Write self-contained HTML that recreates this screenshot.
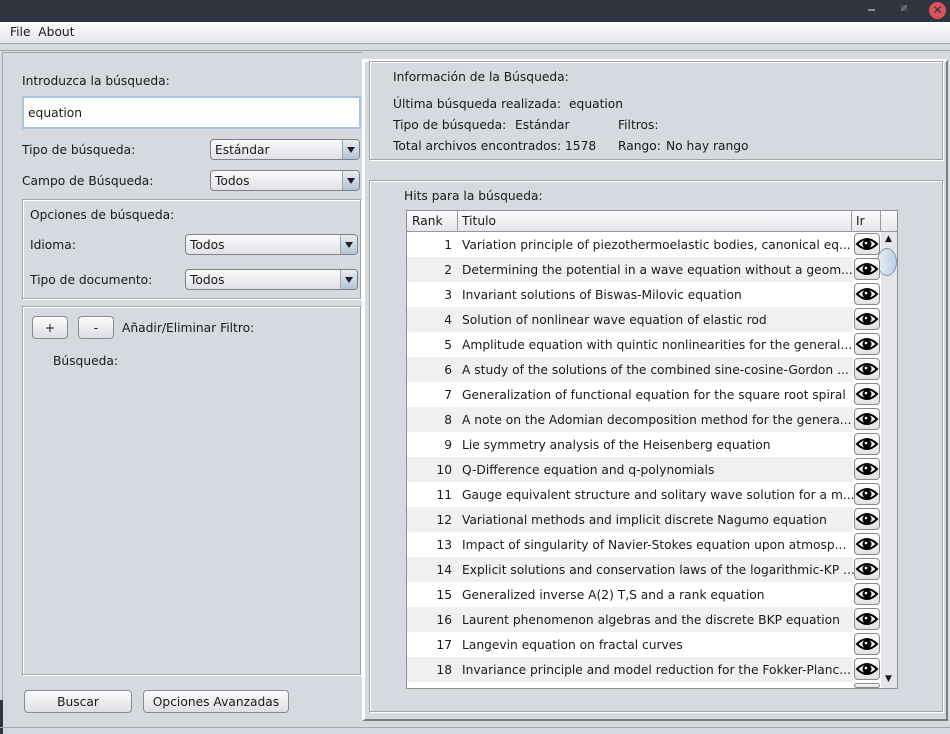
<!DOCTYPE html>
<html><head><meta charset="utf-8"><style>
*{box-sizing:border-box;margin:0;padding:0}
body{width:950px;height:734px;overflow:hidden;background:#d6d9df;font-family:"DejaVu Sans","Liberation Sans",sans-serif;font-size:12.25px;color:#1a1a1a;position:relative}
.a{position:absolute;white-space:nowrap}
.box{position:absolute;border:1px solid #a3a5aa;box-shadow:1px 1px 0 #fff inset,1px 1px 0 #fff}
.combo{position:absolute;height:21px;border:1px solid #7f8186;border-radius:4px;background:linear-gradient(#fbfbfc,#dfe1e5);padding:3px 0 0 4px}
.combo:after{content:"";position:absolute;right:0;top:0;width:16px;height:19px;border-left:1px solid #9aa;background:linear-gradient(#e6edf4,#b4c4d4);border-radius:0 3px 3px 0}
.combo i{position:absolute;right:4px;top:7px;border-left:4px solid transparent;border-right:4px solid transparent;border-top:6px solid #222;z-index:2}
.btn{position:absolute;height:23px;border:1px solid #8a8c90;border-radius:4px;background:linear-gradient(#fcfcfd,#dcdee2);text-align:center;padding-top:4px}
.row{position:absolute;left:407px;width:446px;height:25px}
.row .r{position:absolute;right:401px;top:6px}
.row .t{position:absolute;left:55px;top:6px;white-space:nowrap}
.eye{position:absolute;left:854px;width:26px;height:22px;border:1px solid #888;border-radius:4px;background:linear-gradient(#fff,#e2e2e2)}
</style></head><body>
<div class="a" style="left:0;top:0;width:950px;height:22px;background:#2f343f"></div>
<div class="a" style="left:868px;top:9px;width:7px;height:2px;background:#8a8f99"></div>
<div class="a" style="left:901px;top:5px;width:6px;height:6px;background:linear-gradient(135deg,transparent 40%,#6f7480 40%,#6f7480 60%,transparent 60%),#4a4f5a"></div>
<div class="a" style="left:929px;top:2px;width:17px;height:17px;border-radius:50%;background:#d6545a;color:#2f343f;font-size:12px;font-weight:bold;text-align:center;line-height:17px">✕</div>
<div class="a" style="left:0;top:22px;width:950px;height:22px;background:linear-gradient(#fdfdfe,#e3e5e9);border-bottom:1px solid #a3a5aa"></div>
<div class="a" style="left:10px;top:25px">File&nbsp;&nbsp;About</div>
<div class="a" style="left:0;top:50px;width:950px;height:1px;background:#a3a5aa"></div>

<div class="a" style="left:2px;top:52px;width:360px;height:676px;border-left:1px solid #a3a5aa;border-top:1px solid #a3a5aa"></div>
<div class="a" style="left:22px;top:74px">Introduzca la búsqueda:</div>
<div class="a" style="left:22px;top:96px;width:339px;height:33px;background:#fff;border:2px solid #a9c4de;padding:8px 0 0 4px">equation</div>
<div class="a" style="left:22px;top:143px">Tipo de búsqueda:</div>
<div class="combo" style="left:210px;top:139px;width:150px">Estándar<i></i></div>
<div class="a" style="left:22px;top:174px">Campo de Búsqueda:</div>
<div class="combo" style="left:210px;top:170px;width:150px">Todos<i></i></div>
<div class="box" style="left:22px;top:199px;width:339px;height:100px"></div>
<div class="a" style="left:30px;top:208px">Opciones de búsqueda:</div>
<div class="a" style="left:30px;top:238px">Idioma:</div>
<div class="combo" style="left:185px;top:234px;width:173px">Todos<i></i></div>
<div class="a" style="left:30px;top:273px">Tipo de documento:</div>
<div class="combo" style="left:185px;top:269px;width:173px">Todos<i></i></div>
<div class="box" style="left:22px;top:306px;width:339px;height:369px"></div>
<div class="btn" style="left:32px;top:316px;width:36px">+</div>
<div class="btn" style="left:78px;top:316px;width:36px">-</div>
<div class="a" style="left:122px;top:321px">Añadir/Eliminar Filtro:</div>
<div class="a" style="left:53px;top:354px">Búsqueda:</div>
<div class="btn" style="left:24px;top:690px;width:108px">Buscar</div>
<div class="btn" style="left:143px;top:690px;width:146px">Opciones Avanzadas</div>
<div class="a" style="left:0;top:700px;width:3px;height:34px;background:#2f343f"></div>

<div class="a" style="left:362px;top:59px;width:586px;height:662px;border-left:3px solid #fff;border-top:3px solid #fff;border-bottom:2px solid #7a7c80;border-right:2px solid #7a7c80"></div>
<div class="box" style="left:369px;top:61px;width:574px;height:99px"></div>
<div class="a" style="left:393px;top:70px">Información de la Búsqueda:</div>
<div class="a" style="left:393px;top:97px">Última búsqueda realizada:</div>
<div class="a" style="left:569px;top:97px">equation</div>
<div class="a" style="left:393px;top:118px">Tipo de búsqueda:</div>
<div class="a" style="left:515px;top:118px">Estándar</div>
<div class="a" style="left:618px;top:118px">Filtros:</div>
<div class="a" style="left:393px;top:139px">Total archivos encontrados:</div>
<div class="a" style="left:565px;top:139px">1578</div>
<div class="a" style="left:618px;top:139px">Rango:</div>
<div class="a" style="left:666px;top:139px">No hay rango</div>
<div class="box" style="left:369px;top:180px;width:574px;height:532px"></div>
<div class="a" style="left:404px;top:189px">Hits para la búsqueda:</div>
<div class="a" style="left:406px;top:210px;width:492px;height:479px;border:1px solid #8e9095;background:#fff"></div>
<div class="a" style="left:407px;top:211px;width:490px;height:21px;background:linear-gradient(#fbfbfc,#e4e6ea);border-bottom:1px solid #999"></div>
<div class="a" style="left:457px;top:211px;width:1px;height:21px;background:#999"></div>
<div class="a" style="left:851px;top:211px;width:1px;height:21px;background:#999"></div>
<div class="a" style="left:880px;top:211px;width:1px;height:21px;background:#999"></div>
<div class="a" style="left:412px;top:214px">Rank</div>
<div class="a" style="left:462px;top:214px">Titulo</div>
<div class="a" style="left:856px;top:214px">Ir</div>
<div class="a" style="left:881px;top:232px;width:16px;height:456px;background:#e4e6ea"></div>
<div class="a" style="left:885px;top:234px;font-size:9px">▲</div>
<div class="a" style="left:885px;top:674px;font-size:9px">▼</div>
<div class="a" style="left:877px;top:248px;width:20px;height:28px;border-radius:50%;background:linear-gradient(90deg,#e6eef6,#bcd0e2);border:1px solid #7f98b0"></div>
<div id="rows"></div>
<script>
var t=["Variation principle of piezothermoelastic bodies, canonical eq...","Determining the potential in a wave equation without a geom...","Invariant solutions of Biswas-Milovic equation","Solution of nonlinear wave equation of elastic rod","Amplitude equation with quintic nonlinearities for the general...","A study of the solutions of the combined sine-cosine-Gordon ...","Generalization of functional equation for the square root spiral","A note on the Adomian decomposition method for the genera...","Lie symmetry analysis of the Heisenberg equation","Q-Difference equation and q-polynomials","Gauge equivalent structure and solitary wave solution for a m...","Variational methods and implicit discrete Nagumo equation","Impact of singularity of Navier-Stokes equation upon atmosp...","Explicit solutions and conservation laws of the logarithmic-KP ...","Generalized inverse A(2) T,S and a rank equation","Laurent phenomenon algebras and the discrete BKP equation","Langevin equation on fractal curves","Invariance principle and model reduction for the Fokker-Planc..."];
var h="",eye='<svg width="24" height="20" viewBox="0 0 24 20" style="position:absolute;left:0;top:0"><path d="M2 10Q12 0 22 10Q12 20 2 10Z" fill="none" stroke="#000" stroke-width="2"/><circle cx="12" cy="10" r="4.5" fill="#000"/><circle cx="11" cy="9" r="1.3" fill="#fff"/></svg>';
for(var i=0;i<19;i++){var y=232+i*25;
if(i<18){h+='<div class="row" style="top:'+y+'px;background:'+(i%2?'#f0f0f0':'#fff')+'"><span class="r">'+(i+1)+'</span><span class="t">'+t[i]+'</span></div>';}
var hh=i<18?22:688-y-1;h+='<div class="eye" style="top:'+(y+1)+'px;height:'+hh+'px;overflow:hidden">'+eye+'</div>';}
document.getElementById("rows").innerHTML=h;
</script>
<div class="a" style="left:0;top:727px;width:950px;height:1px;background:#a3a5aa"></div>
</body></html>
